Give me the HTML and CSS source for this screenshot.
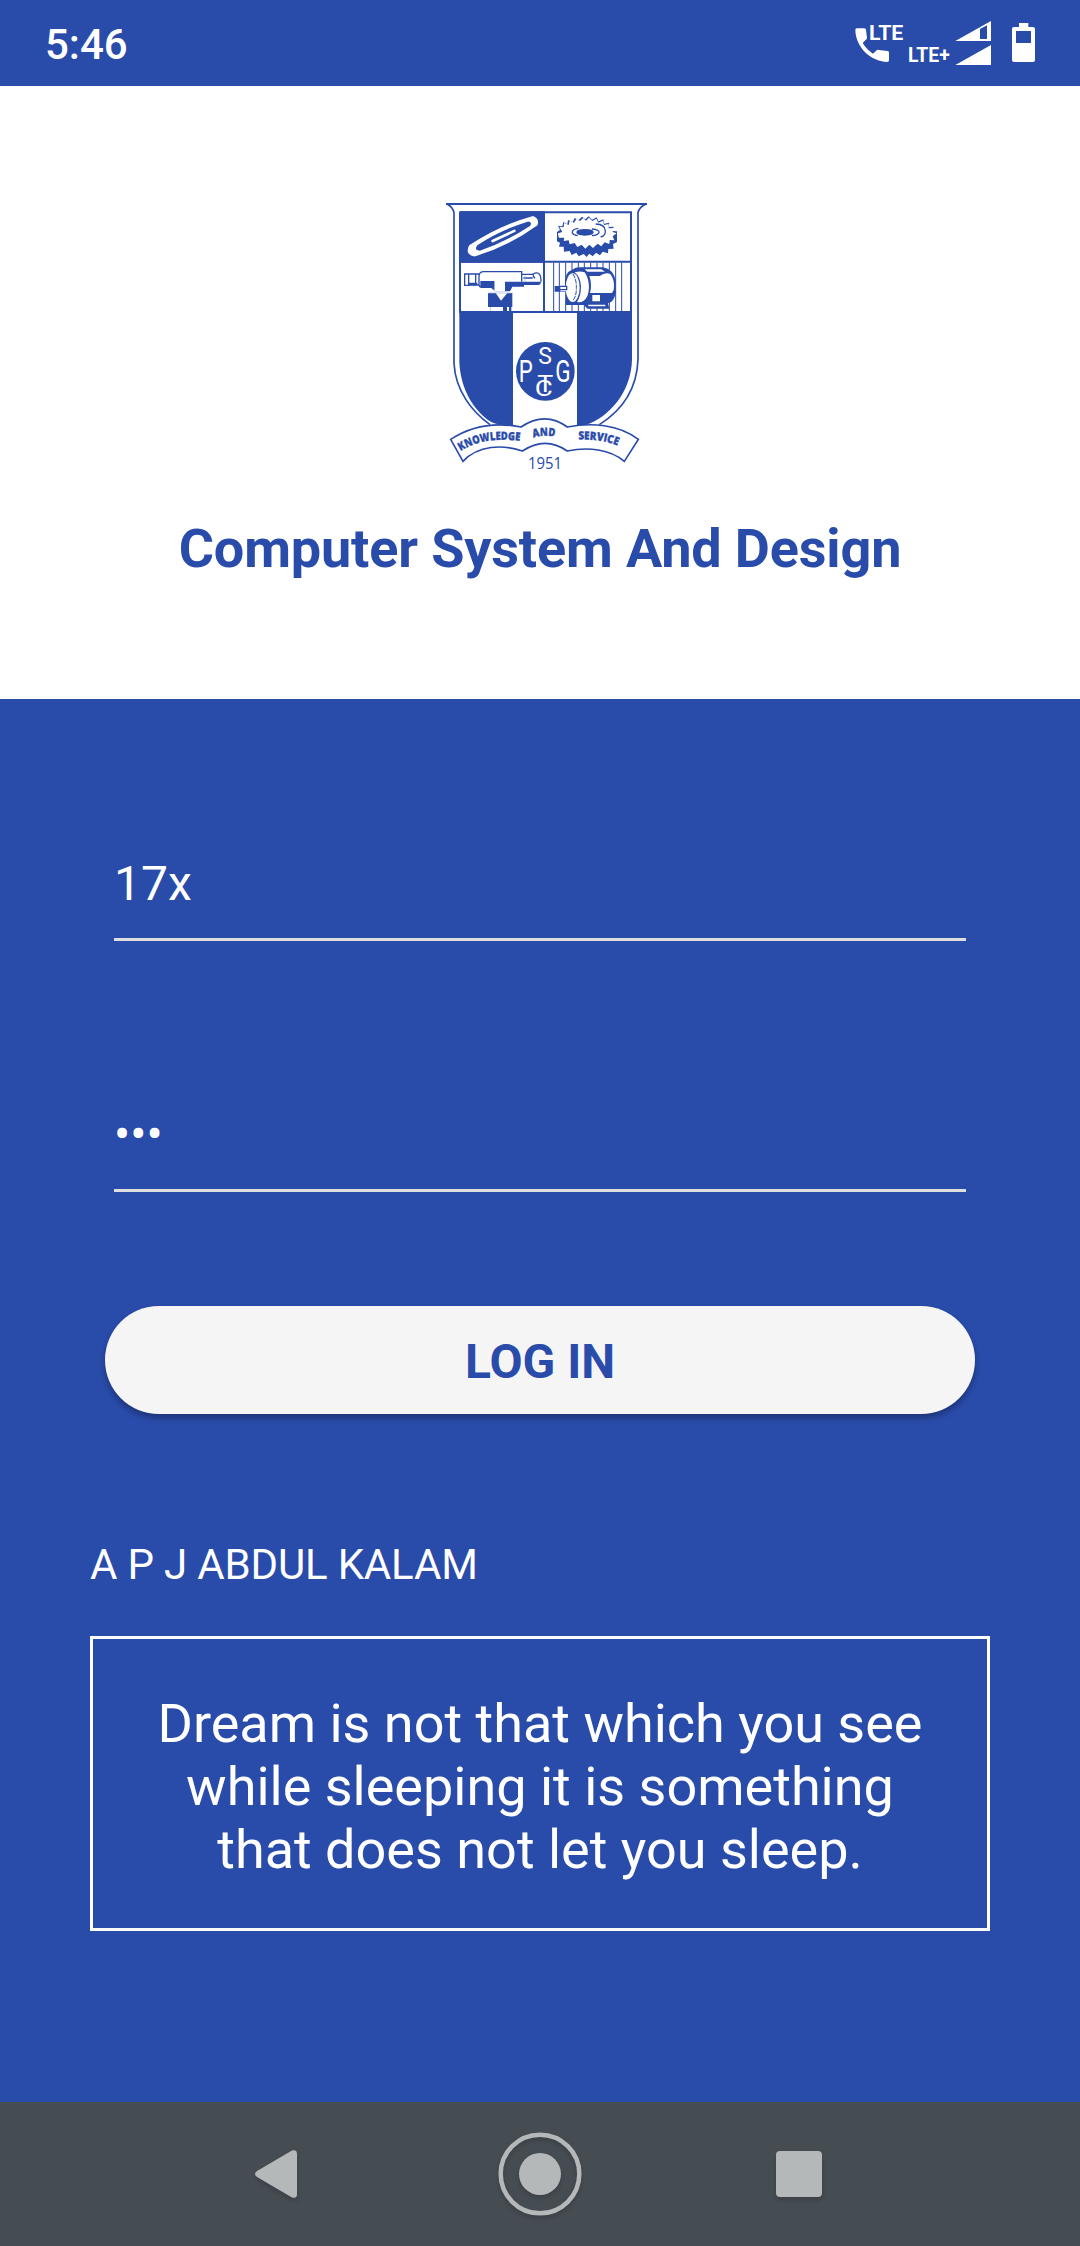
FILE: index.html
```html
<!DOCTYPE html>
<html lang="en">
<head>
<meta charset="utf-8">
<title>Computer System And Design</title>
<link rel="stylesheet" href="styles.css">
</head>
<body>
<div class="screen">
  <header class="status">
    <span class="clock">5:46</span>
    <svg class="status-icons" viewBox="0 0 600 258" aria-label="Phone status">
      <g fill="#fff">
        <path d="M50 85H73Q77 85 78 89L81 113Q81 116 79 118L68 129Q80 149 99 161L111 150Q113 149 117 150L143 153Q147 154 147 158V181Q147 186 142 186C90 184 48 142 46 91Q46 85 50 85Z"/>
        <text class="lte" x="87" y="119" font-size="61" textLength="103" lengthAdjust="spacingAndGlyphs">LTE</text>
        <text class="lte" x="204" y="186" font-size="59" textLength="125" lengthAdjust="spacingAndGlyphs">LTE+</text>
        <path fill-rule="evenodd" d="M346 123L453 63V123ZM420 87V117H441V76Z"/>
        <path d="M346 195L453 135V195Z"/>
        <path fill-rule="evenodd" d="M537 69H565V81H579Q585 81 585 87V180Q585 186 579 186H522Q516 186 516 180V87Q516 81 522 81H537ZM528 93V129H573V93Z"/>
      </g>
    </svg>
  </header>

  <section class="brand">
    <svg class="crest" viewBox="0 0 690 870" role="img" aria-label="PSG CT crest">
      <g fill="none" stroke="#294baa" stroke-width="5">
        <path stroke-width="6" d="M48 42H651"/>
        <path d="M52 43Q68 51 72 68V520C76 602 126 665 180 704"/>
        <path d="M647 43Q628 51 624 68V510C620 602 570 665 508 704"/>
        <path stroke-width="6" d="M90 67H603V366H90V67M90 215H603M342 215V366"/>
      </g>
      <path fill="#294baa" d="M88 64H345V218H88ZM88 363H249V706H225Q191 706 166 684C123 646 92 592 88 516ZM441 363H606V510C603 608 538 681 466 706H441Z"/>
      <!-- shuttle -->
      <g transform="rotate(-25 220 137)">
        <path fill="#fff" fill-rule="evenodd" d="M115 120Q220 103 326 121Q341 137 326 152Q220 173 115 157Q90 139 115 120ZM137 130Q220 118 306 130Q316 137 306 144Q220 157 137 148Q121 139 137 130Z"/>
        <path stroke="#fff" stroke-width="8" stroke-linecap="round" d="M184 138H256"/>
      </g>
      <!-- gear -->
      <path fill="#294baa" d="M381 126L390 120L384 107L397 109L400 96L412 103L414 90L428 96L434 84L445 91L456 80L466 88L476 79L486 89L500 82L505 94L520 88L522 101L538 98L536 111L551 110L547 123L561 124V156L549 162L551 176L535 177L534 190L518 185L510 196L498 188L488 199L478 191L470 201L461 192L446 199L439 188L425 195L419 183L402 185L401 170L387 170L390 158L381 154Z"/>
      <path fill="#fff" d="M384 130L397 126L388 110L401 112L402 99L416 105L419 92L432 98L439 87L450 93L460 84L468 92L477 83L487 93L499 86L505 98L519 92L522 105L536 102L536 115L550 114L548 126L560 130L548 139L553 151L539 150L538 162L524 157L514 169L503 161L489 174L478 164L466 176L455 164L442 171L434 159L419 163L416 151L401 153L403 143L386 143Z"/>
      <g fill="none" stroke="#294baa" stroke-width="4">
        <ellipse cx="465" cy="127" rx="24" ry="8" fill="#294baa"/>
        <path d="M445 115Q425 118 427 129Q431 136 443 137M486 117Q509 119 507 128Q501 137 486 137M497 102Q525 103 526 122Q527 137 512 141"/>
      </g>
      <!-- lathe -->
      <g stroke="#294baa" stroke-width="4" fill="none">
        <path d="M116 252H104V286H116ZM116 252H147M116 285H147M137 252V285M159 245H275V275M159 245Q147 247 147 259V285Q148 292 156 292H190M274 253H308M280 264H308M325 250Q320 246 309 252Q309 260 315 265M325 250Q333 253 333 275"/>
        <path fill="#294baa" stroke="none" d="M116 278H142V286H116ZM151 273H194V304H240L247 290H282V285H324Q333 283 333 275H225V302H194L181 292H151ZM174 309H197L213 332L232 309H247V351H174ZM219 350H231V364H219ZM237 350H244V364H237Z"/>
        <path fill="#fff" stroke="none" d="M194 271H225V304H194Z"/>
        <path stroke-width="2" stroke="#a5b3dc" d="M174 309H247M181 351V363M285 254V275"/>
      </g>
      <!-- motor -->
      <path stroke="#294baa" stroke-width="3" d="M371 218V363M388 218V363M407 218V363M426 218V363M445 218V363M463 218V363M482 218V363M501 218V363M519 218V363M538 218V363M557 218V363M575 218V363"/>
      <path fill="#294baa" d="M374 288H405Q401 248 429 238Q438 230 453 232H519Q550 237 557 273V308Q552 337 534 340L538 356H472L462 345H407L409 305H374Z"/>
      <g fill="#fff">
        <ellipse cx="428" cy="293" rx="21" ry="43"/>
        <path d="M434 247Q451 242 464 247Q476 264 477 291Q476 323 460 333Q449 340 441 335Q453 319 453 287Q451 261 434 247ZM464 238H514L525 245H472ZM478 258H509Q526 245 541 252Q553 268 552 290Q553 302 546 309H480Q487 282 478 258ZM487 315H510V334H487ZM474 344H526V349H476ZM391 289H413V304H391Z"/>
      </g>
      <path fill="none" stroke="#294baa" stroke-width="3" stroke-dasharray="14 3" d="M429 252Q440 270 439 293Q440 318 428 333"/>
      <path fill="none" stroke="#294baa" stroke-width="4" d="M389 289H410V299H389"/>
      <!-- monogram -->
      <circle cx="346" cy="544" r="88" fill="#294baa"/>
      <g class="monogram">
        <text x="325" y="521" font-size="74" textLength="41" lengthAdjust="spacingAndGlyphs">S</text>
        <text x="266" y="577" font-size="96" textLength="42" lengthAdjust="spacingAndGlyphs">P</text>
        <text x="376" y="577" font-size="95" textLength="46" lengthAdjust="spacingAndGlyphs">G</text>
        <text x="322" y="606" font-size="74" textLength="48" lengthAdjust="spacingAndGlyphs">T</text>
        <text x="314" y="619" font-size="66" textLength="54" lengthAdjust="spacingAndGlyphs">C</text>
      </g>
      <!-- ribbon -->
      <path fill="#fff" stroke="#294baa" stroke-width="5" d="M62 748C117 712 187 694 273 711Q345 662 412 711C485 697 565 703 625 748L583 814C540 778 475 770 412 783Q346 737 277 783C217 763 145 765 99 814Z"/>
      <path id="arc-left" fill="none" d="M92 783Q165 736 284 755"/>
      <path id="arc-mid" fill="none" d="M310 743Q343 733 383 742"/>
      <path id="arc-right" fill="none" d="M445 749Q515 746 570 770"/>
      <g class="motto">
        <text><textPath href="#arc-left" textLength="184" lengthAdjust="spacingAndGlyphs">KNOWLEDGE</textPath></text>
        <text><textPath href="#arc-mid" textLength="65" lengthAdjust="spacingAndGlyphs">AND</textPath></text>
        <text><textPath href="#arc-right" textLength="120" lengthAdjust="spacingAndGlyphs">SERVICE</textPath></text>
      </g>
      <text class="year" x="294" y="837" textLength="102" lengthAdjust="spacingAndGlyphs">1951</text>
    </svg>
    <h1 class="title">Computer System And Design</h1>
  </section>

  <main class="login">
    <div class="field">17x</div>
    <div class="field password">•••</div>
    <button class="submit" type="button">LOG IN</button>
    <p class="author">A P J ABDUL KALAM</p>
    <blockquote class="quote">Dream is not that which you see<br>while sleeping it is something<br>that does not let you sleep.</blockquote>
  </main>

  <nav class="navbar">
    <svg class="nav-icons" viewBox="0 0 1080 144" aria-label="Back, home, recents">
      <g fill="#b4b8b9">
        <path d="M257 69L292 48.500Q297 47 297 52V92Q297 97 292 95.500L257 75Q253 72 257 69Z"/>
        <circle cx="540" cy="72" r="21"/>
        <circle cx="540" cy="72" r="39.300" fill="none" stroke="#b4b8b9" stroke-width="4.500"/>
        <rect x="776" y="49" width="46" height="46" rx="4"/>
      </g>
    </svg>
  </nav>
</div>
</body>
</html>
```
FILE: styles.css
```css
* { box-sizing: border-box; }
body { margin: 0; font-family: Roboto, sans-serif; background: #294baa; }
.screen { width: 1080px; height: 2246px; display: flex; flex-direction: column; overflow: hidden; }
.status { height: 86px; flex: none; display: flex; justify-content: space-between; padding: 0 40px 0 45px; color: #fff; }
.clock { font-size: 42px; font-weight: 500; line-height: 90px; }
.status-icons { width: 200px; height: 86px; }
.lte { font-family: Roboto, sans-serif; font-weight: 700; }
.brand { height: 613px; flex: none; background: #fff; display: flex; flex-direction: column; align-items: center; padding-top: 104px; }
.crest { width: 230px; height: 290px; margin-left: 10px; }
.monogram { font-family: Roboto, sans-serif; font-weight: 400; fill: #fff; }
.motto { font-family: "Open Sans", sans-serif; font-weight: 800; font-size: 34px; fill: #294baa; stroke: #294baa; stroke-width: 1; }
.year { font-family: "Open Sans", sans-serif; font-size: 49px; fill: #294baa; }
.title { margin: 37px 0 0; font-size: 54px; font-weight: 700; line-height: 64px; letter-spacing: -.15px; color: #294baa; white-space: nowrap; }
.login { flex: 1; display: flex; flex-direction: column; padding: 135px 90px 0; color: #fff; }
.field { height: 107px; margin: 0 24px; border-bottom: 3px solid #dfdfdf; font-size: 48px; line-height: 100px; }
.password { margin-top: 144px; }
.submit { height: 108px; margin: 114px 15px 0; border: 0; border-radius: 54px; background: #f5f5f5; color: #294baa; font: 700 48px/108px Roboto, sans-serif; padding: 2px 0 0; box-shadow: 0 4px 6px rgba(0, 0, 0, .3); }
.author { margin: 126px 0 0; font-size: 42px; line-height: 50px; letter-spacing: -.17px; }
.quote { margin: 46px 0 0; height: 295px; border: 3px solid #fff; padding-top: 53px; text-align: center; font-size: 54px; line-height: 63px; white-space: nowrap; }
.navbar { height: 144px; flex: none; background: #454c52; }
.nav-icons { display: block; width: 1080px; height: 144px; filter: drop-shadow(0 3px 2px rgba(0, 0, 0, .15)); }
```
